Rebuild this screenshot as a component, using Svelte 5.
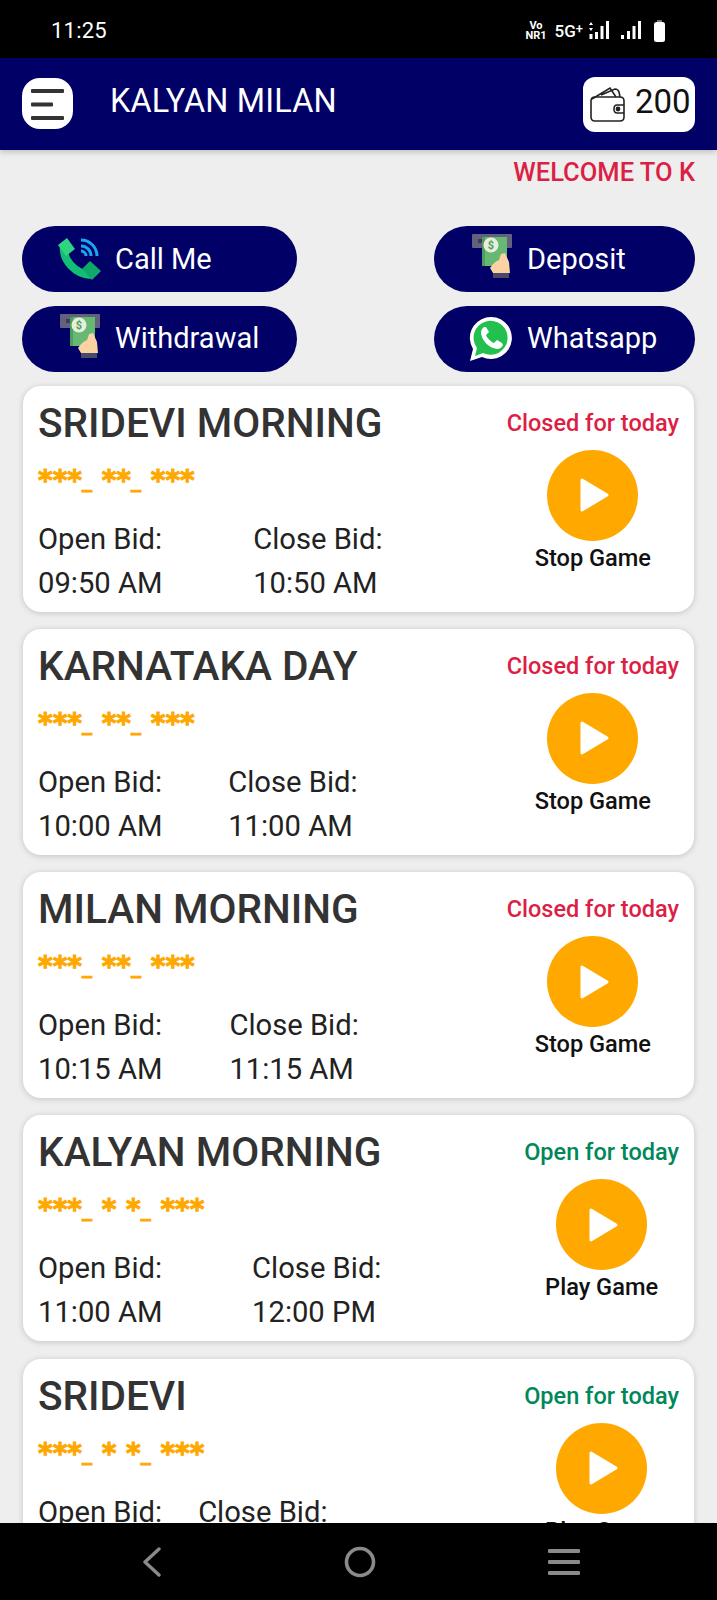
<script>
  const games = [
    { name: 'SRIDEVI MORNING', digits: '***_ **_ ***', open: '09:50 AM', close: '10:50 AM', live: false },
    { name: 'KARNATAKA DAY', digits: '***_ **_ ***', open: '10:00 AM', close: '11:00 AM', live: false },
    { name: 'MILAN MORNING', digits: '***_ **_ ***', open: '10:15 AM', close: '11:15 AM', live: false },
    { name: 'KALYAN MORNING', digits: '***_ * *_ ***', open: '11:00 AM', close: '12:00 PM', live: true },
    { name: 'SRIDEVI', digits: '***_ * *_ ***', open: '12:00 PM', close: '01:00 PM', live: true }
  ];
</script>

{#snippet atm()}
  <svg class="ico atm" viewBox="0 0 40 46" aria-hidden="true">
    <rect x="0" y="1" width="40" height="14" rx="1" fill="#62627f"/>
    <rect x="6" y="6" width="29" height="4" fill="#3d3d58"/>
    <rect x="10" y="4" width="25" height="29" fill="#66b873"/>
    <rect x="10" y="4" width="3" height="29" fill="#4f9e60"/>
    <circle cx="19" cy="12" r="7.5" fill="#e6efdc"/>
    <text x="19" y="16" font-size="11" font-family="Roboto, sans-serif" font-weight="700" text-anchor="middle" fill="#4f9e60">$</text>
    <path d="M18 35 Q22 29 27 27 L29 21 L33 20 L37 29 L38 40 L21 40 Z" fill="#fbd3a2"/>
    <rect x="21" y="40" width="16" height="5" fill="#4a4a68"/>
  </svg>
{/snippet}

<div class="screen">
  <div class="status">
    <span class="time">11:25</span>
    <div class="sys">
      <span class="vonr">Vo<br />NR1</span>
      <span class="five">5G<sup>+</sup></span>
      <svg class="sig1" width="20" height="20" viewBox="0 0 20 20" aria-hidden="true">
        <path d="M2 1 L4 4 H0 Z M2 10 L0 7 H4 Z" fill="#fff"/>
        <rect x="0.5" y="13" width="3" height="5" fill="#fff"/>
        <rect x="6" y="11" width="3" height="7" fill="#fff"/>
        <rect x="11.5" y="5" width="3" height="13" fill="#fff"/>
        <rect x="17" y="0" width="3" height="18" fill="#fff"/>
      </svg>
      <svg class="sig2" width="20" height="20" viewBox="0 0 20 20" aria-hidden="true">
        <rect x="0" y="14" width="3" height="4" fill="#fff"/>
        <rect x="6" y="10" width="3" height="8" fill="#fff"/>
        <rect x="11.5" y="5" width="3" height="13" fill="#fff"/>
        <rect x="17" y="0" width="3" height="18" fill="#fff"/>
      </svg>
      <svg class="batt" width="11" height="22" viewBox="0 0 11 22" aria-hidden="true">
        <rect x="3" y="0" width="5" height="3" fill="#777"/>
        <rect x="0" y="2" width="11" height="20" rx="2.5" fill="#fff"/>
      </svg>
    </div>
  </div>

  <header class="bar">
    <div class="menu">
      <svg width="36" height="34" viewBox="0 0 36 34" aria-hidden="true">
        <rect x="1" y="2" width="33" height="4" rx="1" fill="#333"/>
        <rect x="1" y="15.5" width="22" height="4" rx="1" fill="#333"/>
        <rect x="1" y="29" width="33" height="4" rx="1" fill="#333"/>
      </svg>
    </div>
    <h1>KALYAN MILAN</h1>
    <div class="wallet">
      <svg width="38" height="36" viewBox="0 0 38 36" fill="none" stroke="#222" stroke-width="1.6" aria-hidden="true">
        <path d="M2 15 Q2 11 6 11 H31 Q35 11 35 15 V31 Q35 35 31 35 H6 Q2 35 2 31 Z"/>
        <path d="M3 13 L21 2 L27 11 M12 9 L26 3 Q29 3 30 6 L31 11"/>
        <path d="M35 19 H28 Q25 19 25 23 Q25 27 28 27 H35"/>
        <circle cx="29" cy="23" r="1.6" fill="#222"/>
      </svg>
      <span>200</span>
    </div>
  </header>

  <main>
    <div class="ticker">WELCOME TO K</div>

    <div class="actions">
      <div class="pill">
        <svg class="ico" viewBox="0 0 45 42" fill="none" aria-hidden="true">
          <path d="M7 7 C5 22 18 36 34 37" stroke="#12bd76" stroke-width="8"/>
          <path d="M1 7 L10 0 L18 11 L9 18 Z" fill="#2ed47f"/>
          <path d="M25 31 L33 23 L44 33 L35 42 Z" fill="#0fa868"/>
          <path d="M24 13 A5 5 0 0 1 29 18 M24 8 A10 10 0 0 1 34 18 M24 2 A16 16 0 0 1 40 18" stroke="#18a8f0" stroke-width="3"/>
        </svg>
        <span>Call Me</span>
      </div>
      <div class="pill">
        {@render atm()}
        <span>Deposit</span>
      </div>
      <div class="pill">
        {@render atm()}
        <span>Withdrawal</span>
      </div>
      <div class="pill">
        <svg class="ico wa" viewBox="0 0 44 46" aria-hidden="true">
          <path d="M1 45 L4 33 A21 21 0 1 1 13 41 Z" fill="#fff"/>
          <path d="M6 40 L8 32 A17 17 0 1 1 14 37 Z" fill="#22c04f"/>
          <path d="M15 11 Q12 13 12 17 C13 25 20 32 28 33 Q32 33 34 29 L33 27 L28 24 L25 27 C22 26 18 22 17 19 L20 16 L17 11 Z" fill="#fff"/>
        </svg>
        <span>Whatsapp</span>
      </div>
    </div>

    <div class="list">
      {#each games as g}
        <article class="card">
          <div class="info">
            <h2>{g.name}</h2>
            <div class="digits">{#each g.digits.split('_') as part, i}{part}{#if i < g.digits.split('_').length - 1}<span class="us">_</span>{/if}{/each}</div>
            <div class="bids">
              <div><div>Open Bid:</div><div>{g.open}</div></div>
              <div><div>Close Bid:</div><div>{g.close}</div></div>
            </div>
          </div>
          <div class="side">
            <div class="state" class:live={g.live}>{g.live ? 'Open for today' : 'Closed for today'}</div>
            <div class="play">
              <svg width="30" height="36" viewBox="0 0 30 36" aria-hidden="true">
                <path d="M2 3 L27 18 L2 33 Z" fill="#fff" stroke="#fff" stroke-width="3" stroke-linejoin="round"/>
              </svg>
            </div>
            <div class="cta">{g.live ? 'Play Game' : 'Stop Game'}</div>
          </div>
        </article>
      {/each}
    </div>
  </main>

  <nav class="softkeys">
    <svg width="20" height="30" viewBox="0 0 20 30" fill="none" stroke="#8a8a8a" stroke-width="3.4" stroke-linecap="round" stroke-linejoin="round" aria-hidden="true">
      <path d="M17 2 L3 15 L17 28"/>
    </svg>
    <svg class="home" width="32" height="32" viewBox="0 0 32 32" fill="none" stroke="#8a8a8a" stroke-width="3.6" aria-hidden="true">
      <circle cx="16" cy="16" r="13.5"/>
    </svg>
    <svg width="32" height="26" viewBox="0 0 32 26" fill="#8a8a8a" aria-hidden="true">
      <rect y="0" width="32" height="4" rx="1"/>
      <rect y="11" width="32" height="4" rx="1"/>
      <rect y="22" width="32" height="4" rx="1"/>
    </svg>
  </nav>
</div>

<style>
  :global(body) { margin: 0; background: #eee; }
  .screen {
    width: 717px;
    height: 1600px;
    display: flex;
    flex-direction: column;
    overflow: hidden;
    font-family: Roboto, "Noto Sans", sans-serif;
    background: #eeeeee;
  }
  .status {
    height: 58px;
    box-sizing: border-box;
    padding: 3px 52px 0 51px;
    flex: none;
    background: #000;
    color: #fff;
    display: flex;
    align-items: center;
    justify-content: space-between;
  }
  .time { font-size: 22px; font-weight: 400; letter-spacing: .2px; }
  .sys { display: flex; align-items: center; }
  .vonr { font-size: 11px; line-height: 10px; font-weight: 700; text-align: center; }
  .five { font-size: 17px; font-weight: 500; margin-left: 8px; }
  .five sup { font-size: 13px; line-height: 0; vertical-align: 4px; }
  .sig1 { margin-left: 6px; }
  .sig2 { margin-left: 12px; }
  .batt { margin-left: 13px; }

  .bar {
    height: 92px;
    flex: none;
    background: #000066;
    display: flex;
    align-items: center;
    padding: 0 22px;
    box-shadow: 0 2px 6px rgba(0,0,0,.2);
    position: relative;
    z-index: 1;
  }
  .menu {
    width: 51px;
    height: 51px;
    margin-top: -1px;
    border-radius: 18px;
    background: #fff;
    display: flex;
    align-items: center;
    justify-content: center;
  }
  .bar h1 {
    flex: 1;
    margin: -6px 0 0 37px;
    font-size: 32.4px;
    font-weight: 400;
    color: #fff;
    letter-spacing: .2px;
  }
  .wallet {
    width: 112px;
    height: 55px;
    box-sizing: border-box;
    border-radius: 12px;
    background: #fff;
    display: flex;
    align-items: center;
    gap: 8px;
    padding: 0 0 0 6px;
    font-size: 33px;
    color: #111;
  }
  .wallet span { margin-top: -6px; }

  main { flex: 1; min-height: 0; overflow: hidden; }
  .ticker {
    height: 76px;
    box-sizing: border-box;
    padding: 4px 22px 0 0;
    text-align: right;
    font-size: 25.5px;
    line-height: 36px;
    font-weight: 500;
    color: #dc1f45;
    white-space: nowrap;
  }
  .actions {
    display: grid;
    grid-template-columns: 275px 261px;
    justify-content: space-between;
    row-gap: 13.5px;
    padding: 0 22px;
  }
  .pill {
    height: 66px;
    border-radius: 33px;
    background: #000066;
    color: #fff;
    display: flex;
    align-items: center;
    padding-left: 35px;
    gap: 13px;
    font-size: 29px;
  }
  .pill span { margin-top: -1px; }
  .ico { width: 45px; height: 42px; flex: none; }
  .atm { width: 40px; height: 46px; margin: -6px 2px 0 3px; }
  .wa { width: 44px; height: 46px; margin-right: 1px; }

  .list {
    display: flex;
    flex-direction: column;
    gap: 17.3px;
    padding: 14px 23px 0;
  }
  .card {
    height: 226px;
    flex: none;
    box-sizing: border-box;
    background: #fff;
    border-radius: 18px;
    box-shadow: 0 1px 6px rgba(0,0,0,.18);
    padding: 12px 15px 0;
    display: flex;
    justify-content: space-between;
    align-items: flex-start;
  }
  .info { width: fit-content; }
  h2 {
    margin: 0;
    font-size: 40.6px;
    line-height: 50px;
    font-weight: 500;
    color: #333;
    white-space: nowrap;
  }
  .digits {
    margin-top: 12px;
    height: 42px;
    font-family: "DejaVu Sans", sans-serif;
    font-size: 28px;
    line-height: 42px;
    font-weight: 700;
    color: #ffa800;
    white-space: pre;
    -webkit-text-stroke: 1px #ffa800;
  }
  .us { font-size: 20px; vertical-align: 3px; line-height: 0; }
  .bids {
    margin-top: 15px;
    display: flex;
    justify-content: space-between;
    gap: 36px;
    font-size: 29.2px;
    line-height: 44px;
    color: #222;
    white-space: nowrap;
  }
  .side {
    display: flex;
    flex-direction: column;
    align-items: center;
  }
  .state {
    font-size: 23.5px;
    line-height: 50px;
    font-weight: 500;
    color: #dc1f45;
    white-space: nowrap;
  }
  .state.live { color: #00875a; }
  .play {
    width: 91px;
    height: 91px;
    margin-top: 2px;
    padding-left: 5px;
    box-sizing: border-box;
    border-radius: 50%;
    background: #ffa800;
    display: flex;
    align-items: center;
    justify-content: center;
  }
  .cta {
    margin-top: -1px;
    font-size: 23.6px;
    line-height: 36px;
    font-weight: 500;
    color: #111;
  }

  .softkeys {
    height: 77px;
    flex: none;
    background: #000;
    position: relative;
    z-index: 2;
    display: flex;
    align-items: center;
    justify-content: space-between;
    padding: 0 137px 0 142px;
  }
  .home { margin-left: 9px; }
</style>
